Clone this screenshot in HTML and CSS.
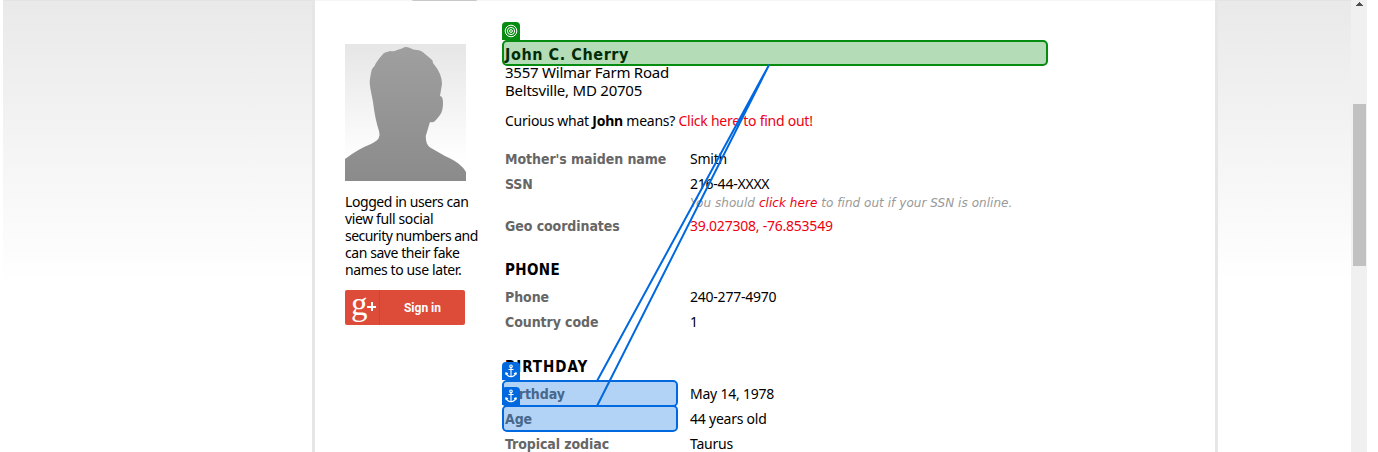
FILE: index.html
```html
<!DOCTYPE html>
<html lang="en">
<head>
<meta charset="utf-8">
<title>John C. Cherry</title>
<link rel="stylesheet" href="styles.css">
</head>
<body>
<div class="window">
  <div class="page">
    <main class="sheet">
      <div class="tab"></div>
      <aside class="side">
        <svg class="avatar" viewBox="0 0 121 137">
          <defs>
            <linearGradient id="sky" x1="0" y1="0" x2="0" y2="1"><stop offset="0" stop-color="#e6e6e6"/><stop offset=".85" stop-color="#fff"/></linearGradient>
            <linearGradient id="body" x1="0" y1="0" x2="0" y2="1"><stop offset="0" stop-color="#9f9f9f"/><stop offset="1" stop-color="#8b8b8b"/></linearGradient>
          </defs>
          <rect width="121" height="137" fill="url(#sky)"/>
          <path fill="url(#body)" d="M0 137V115Q13 105 26 100Q34 96 34 93Q35 91 34 87Q30 75 28 58C26 47 24 40 25 35Q26 28 27 25Q30 22 31 19Q35 13 39 9Q42 8 45 7Q49 8 52 6Q56 5 58 4Q60 2 65 4Q68 6 72 6Q76 6 80 10L86 15Q88 16 88 19Q93 25 95 30Q97 35 97 40Q96 46 95 52Q98 52 98 59Q98 67 95 71Q92 75 90 77Q88 79 85 78Q84 81 82 88Q80 92 81 96Q82 102 86 104L100 112Q109 116 114 120Q119 124 121 128V137Z"/>
        </svg>
        <p class="hint">Logged in users can<br><span class="looser">view full social</span><br><span class="tighter">security numbers and</span><br>can save their fake<br><span class="looser">names to use later.</span></p>
        <div class="signin"><span class="gplus"><b>g</b><i></i></span><span class="signin-text">Sign in</span></div>
      </aside>
      <section class="content">
        <h1>John C. Cherry</h1>
        <p class="address">3557 Wilmar Farm Road<br>Beltsville, MD 20705</p>
        <p class="curious">Curious what <b>John</b> means? <a>Click here to find out!</a></p>
        <dl>
          <dt>Mother's maiden name</dt><dd>Smith</dd>
          <dt>SSN</dt><dd>216-44-XXXX<div class="note">You should <a>click here</a> to find out if your SSN is online.</div></dd>
          <dt>Geo coordinates</dt><dd><a>39.027308, -76.853549</a></dd>
        </dl>
        <h3 class="phone">PHONE</h3>
        <dl>
          <dt>Phone</dt><dd>240-277-4970</dd>
          <dt>Country code</dt><dd>1</dd>
        </dl>
        <h3 class="birth">BIRTHDAY</h3>
        <dl>
          <dt>Birthday</dt><dd>May 14, 1978</dd>
          <dt>Age</dt><dd>44 years old</dd>
          <dt>Tropical zodiac</dt><dd>Taurus</dd>
        </dl>
      </section>
    </main>
  </div>
  <div class="scrollbar"><svg class="arrow" viewBox="0 0 7 4"><path d="M3 0h1v1h1v1h1v1h1v1H0V3h1V2h1V1h1z" fill="#505050"/></svg><div class="thumb"></div></div>
</div>
<div class="mark target"></div>
<div class="mark anchor birthday"></div>
<div class="mark anchor age"></div>
<svg class="links" viewBox="0 0 1378 452"><path d="M769 65L597 381M769 65L597 406" fill="none" stroke="#0069e0" stroke-width="2"/></svg>
<div class="badge target-badge"><svg viewBox="0 0 18 18"><g fill="none" stroke="#fff"><circle cx="9" cy="9" r="5.8"/><circle cx="9" cy="9" r="3.6"/><circle cx="9" cy="9" r="1.4"/></g></svg></div>
<div class="badge birthday-badge"><svg viewBox="0 0 18 18"><g fill="none" stroke="#fff" stroke-width="1.1"><circle cx="9" cy="4.3" r="1.3"/><path d="M9 5.5V15M6.5 7.5h5M4 11Q5 14.3 9 14.7Q13 14.3 14 11M3.5 12.5L4 10.7L6 11.8M14.5 12.5L14 10.7L12 11.8"/></g></svg></div>
<div class="badge age-badge"><svg viewBox="0 0 18 18"><g fill="none" stroke="#fff" stroke-width="1.1"><circle cx="9" cy="4.3" r="1.3"/><path d="M9 5.5V15M6.5 7.5h5M4 11Q5 14.3 9 14.7Q13 14.3 14 11M3.5 12.5L4 10.7L6 11.8M14.5 12.5L14 10.7L12 11.8"/></g></svg></div>
</body>
</html>
```

FILE: styles.css
```css
* { box-sizing: border-box; }
body { margin: 0; width: 1378px; height: 452px; overflow: hidden; position: relative; background: #fff; color: #000; font: 14px/17px "Noto Sans", sans-serif; }
p, h1, h3, dl, dd { margin: 0; }
p, h1, h3, dt, dd { white-space: nowrap; }
a { color: #ee0011; }
.window { display: flex; height: 452px; padding-left: 3px; }
.page { width: 1348px; padding-left: 309px; background: linear-gradient(#e3e3e3, #e3e3e3) 0 0 / 100% 1px no-repeat, linear-gradient(#e9e9e9, #fff 285px); }
.sheet { width: 906px; height: 452px; overflow: hidden; display: flex; position: relative; background: linear-gradient(#f6f6f6, #f6f6f6) 0 0 / 100% 1px no-repeat, #fff; border: solid #e6e6e6; border-width: 0 3px; padding-left: 30px; }
.tab { position: absolute; left: 96px; top: -4px; width: 67px; height: 5px; background: #c8c8c8; border-radius: 0 0 3px 3px; }
.side { width: 160px; padding-top: 44px; }
.avatar { display: block; width: 121px; height: 137px; }
.hint { margin-top: 12px; letter-spacing: -.43px; }
.looser { letter-spacing: -.38px; }
.tighter { letter-spacing: -.53px; }
.signin { display: flex; width: 120px; height: 35px; margin-top: 12px; background: #dd4b39; color: #fff; border-radius: 2px; }
.gplus { display: flex; width: 35px; border-right: 1px solid #c94535; padding-left: 6px; }
.gplus b { font: 33px/28px "Liberation Serif", serif; width: 16px; }
.gplus i { width: 9px; height: 9px; margin: 12px 0 0; background: linear-gradient(#fff, #fff) 50% 50% / 2px 9px no-repeat, linear-gradient(#fff, #fff) 50% 50% / 9px 2px no-repeat; }
.signin-text { flex: 1; text-align: center; font: bold 12px/36px Roboto, sans-serif; }
.content { padding-top: 45px; }
h1 { height: 18px; font: bold 16px/19px "DejaVu Sans Condensed", "DejaVu Sans", sans-serif; letter-spacing: .57px; }
.address { font-size: 15px; line-height: 18px; letter-spacing: -.23px; }
.curious { height: 17px; margin: 13px 0 18px; letter-spacing: -.25px; }
dl { display: grid; grid-template-columns: 185px 1fr; }
dt, dd { padding: 4px 0; }
dt, h3 { font: bold 14px/17px "DejaVu Sans Condensed", "DejaVu Sans", sans-serif; letter-spacing: -.07px; }
dt { color: #666; }
dd { padding: 3px 0 5px; letter-spacing: -.23px; }
.note { height: 17px; font: italic 12px/23px "DejaVu Sans", sans-serif; color: #999; letter-spacing: .05px; }
h3 { font-size: 15px; letter-spacing: .4px; }
.phone { height: 46px; padding-top: 23px; }
.birth { height: 47px; padding-top: 24px; letter-spacing: .95px; }
.scrollbar { width: 16px; background: #f0f0f0; position: relative; }
.arrow { position: absolute; left: 5px; top: 2px; width: 7px; height: 4px; }
.thumb { width: 13px; height: 162px; margin: 104px 0 0 2px; background: #c1c1c1; }
.mark { position: absolute; border: 2px solid; border-radius: 5px; }
.target { left: 502px; top: 40px; width: 546px; height: 26px; border-color: #068c10; background: rgba(6, 140, 16, .3); }
.anchor { left: 502px; width: 176px; height: 27px; border-color: #0069e0; background: rgba(0, 105, 224, .3); background-clip: padding-box; }
.birthday { top: 380px; }
.age { top: 405px; }
.links { position: absolute; left: 0; top: 0; width: 1378px; height: 452px; }
.badge { position: absolute; left: 502px; width: 18px; height: 18px; border-radius: 4px 4px 0 0; background: #0069e0; }
.badge svg { display: block; width: 18px; height: 18px; }
.target-badge { top: 22px; background: #068c10; }
.birthday-badge { top: 362px; }
.age-badge { top: 387px; }
```
